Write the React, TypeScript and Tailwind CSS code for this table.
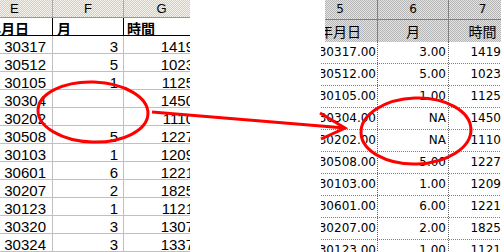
const leftRows = [
  ["30317", "3", "1419"],
  ["30512", "5", "1023"],
  ["30105", "1", "1125"],
  ["30304", "", "1450"],
  ["30202", "", "1110"],
  ["30508", "5", "1227"],
  ["30103", "1", "1209"],
  ["30601", "6", "1221"],
  ["30207", "2", "1825"],
  ["30123", "1", "1121"],
  ["30320", "3", "1307"],
  ["30324", "3", "1337"],
];

const rightRows = [
  ["30317.00", "3.00", "1419"],
  ["30512.00", "5.00", "1023"],
  ["30105.00", "1.00", "1125"],
  ["30304.00", "NA", "1450"],
  ["30202.00", "NA", "1110"],
  ["30508.00", "5.00", "1227"],
  ["30103.00", "1.00", "1209"],
  ["30601.00", "6.00", "1221"],
  ["30207.00", "2.00", "1825"],
  ["30123.00", "1.00", "1121"],
];

const beige =
  "bg-[conic-gradient(#d4cfbd_25%,#f4f2ea_0_50%,#d4cfbd_0_75%,#f4f2ea_0)] bg-[length:2px_2px]";
const gray =
  "bg-[conic-gradient(#b4b4b4_25%,#e4e4e4_0_50%,#b4b4b4_0_75%,#e4e4e4_0)] bg-[length:2px_2px]";

function ExcelSheet() {
  return (
    <div className="w-[190px] h-[252px] overflow-hidden shrink-0 font-['Liberation_Sans',sans-serif] text-black">
      <div className="w-[199px]">
        <div className={`grid grid-cols-[53px_71px_75px] h-[18px] border-b border-[#9c9884] text-[13px] leading-[17px] ${beige}`}>
          <div className="border-r border-[#a8a8a8] pl-[10px]">E</div>
          <div className="border-r border-[#a8a8a8] text-center">F</div>
          <div className="text-center">G</div>
        </div>
        <div className="grid grid-cols-[53px_71px_75px] h-[18px] border-b border-black font-['Noto_Sans_CJK_JP',sans-serif] font-bold text-[14px] leading-[20px]">
          <div className="border-r border-black overflow-hidden whitespace-nowrap">
            <span className="-ml-[13px]">年月日</span>
          </div>
          <div className="border-r border-black pl-[4px]">月</div>
          <div className="pl-[3px]">時間</div>
        </div>
        {leftRows.map((r, i) => (
          <div
            key={i}
            className="grid grid-cols-[53px_71px_75px] h-[18px] border-b border-[#c0c0c0] text-[15px] leading-[22px]"
          >
            <div className="border-r border-[#c0c0c0] text-right pr-[6px]">{r[0]}</div>
            <div className="border-r border-[#c0c0c0] text-right pr-[5px]">{r[1]}</div>
            <div className="text-right pr-[5px]">{r[2]}</div>
          </div>
        ))}
      </div>
    </div>
  );
}

function StatSheet() {
  return (
    <div className="ml-[131px] w-[180px] h-[252px] overflow-hidden shrink-0 font-['DejaVu_Sans',sans-serif] text-[12px] text-black">
      <div className="-ml-[18px] w-[213px]">
        <div className={`ml-[22px] grid grid-cols-[53px_71px_67px] h-[20px] border-b border-[#808080] leading-[18px] ${gray}`}>
          <div className="border-r border-[#808080] flex justify-center pr-[22px]">5</div>
          <div className="border-r border-[#808080] text-center">6</div>
          <div className="text-center">7</div>
        </div>
        <div className={`ml-[22px] grid grid-cols-[53px_71px_67px] h-[22px] font-['Noto_Sans_CJK_JP',sans-serif] text-[14px] leading-[22px] ${gray}`}>
          <div className="border-r border-[#808080] flex justify-center pr-[22px] overflow-hidden whitespace-nowrap">
            <span className="shrink-0">年月日</span>
          </div>
          <div className="border-r border-[#808080] text-center">月</div>
          <div className="text-center">時間</div>
        </div>
        {rightRows.map((r, i) => (
          <div
            key={i}
            className="grid grid-cols-[75px_71px_67px] h-[22px] border-b border-dotted border-[#808080] leading-[21px]"
          >
            <div className="border-r border-dotted border-[#606060] text-right pr-[1px]">{r[0]}</div>
            <div className="border-r border-dotted border-[#606060] text-right pr-[2px]">{r[1]}</div>
            <div className="text-right pr-[15px]">{r[2]}</div>
          </div>
        ))}
      </div>
    </div>
  );
}

export default function App() {
  return (
    <div className="relative w-[501px] h-[252px] overflow-hidden bg-white flex">
      <ExcelSheet />
      <StatSheet />
      <svg className="absolute inset-0 pointer-events-none" width="501" height="252" viewBox="0 0 501 252">
        <ellipse cx="93" cy="112" rx="55" ry="30" fill="none" stroke="#ff0000" strokeWidth="3" transform="rotate(2 93 112)" />
        <path d="M152 112 L345 128 M320 113 L345 128 L321 139" fill="none" stroke="#ff0000" strokeWidth="3" />
        <ellipse cx="416" cy="131" rx="55" ry="33" fill="none" stroke="#ff0000" strokeWidth="3" transform="rotate(-2 416 131)" />
      </svg>
    </div>
  );
}
